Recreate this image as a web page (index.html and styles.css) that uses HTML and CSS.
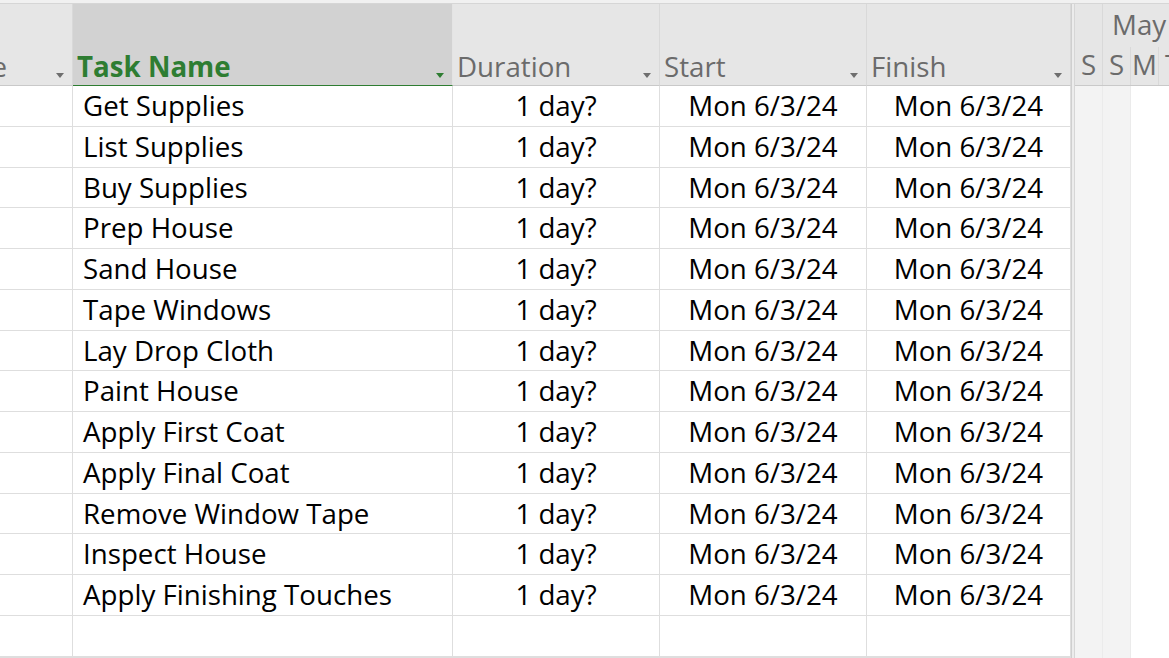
FILE: index.html
```html
<!DOCTYPE html>
<html>
<head>
<meta charset="utf-8">
<link rel="stylesheet" href="styles.css">
</head>
<body>
<div class="app">
  <div class="topbar"></div>
  <div class="main">
    <div class="sheet">
      <div class="hcell hcell-first"><span class="hlabel">Task Mode</span><span class="arrow"></span></div>
      <div class="hcell hcell-sel"><span class="hlabel">Task Name</span><span class="arrow arrow-green"></span></div>
      <div class="hcell"><span class="hlabel">Duration</span><span class="arrow"></span></div>
      <div class="hcell"><span class="hlabel">Start</span><span class="arrow"></span></div>
      <div class="hcell"><span class="hlabel">Finish</span><span class="arrow"></span></div>

      <div class="cell"></div><div class="cell name">Get Supplies</div><div class="cell center">1 day?</div><div class="cell center">Mon 6/3/24</div><div class="cell center">Mon 6/3/24</div>
      <div class="cell"></div><div class="cell name">List Supplies</div><div class="cell center">1 day?</div><div class="cell center">Mon 6/3/24</div><div class="cell center">Mon 6/3/24</div>
      <div class="cell"></div><div class="cell name">Buy Supplies</div><div class="cell center">1 day?</div><div class="cell center">Mon 6/3/24</div><div class="cell center">Mon 6/3/24</div>
      <div class="cell"></div><div class="cell name">Prep House</div><div class="cell center">1 day?</div><div class="cell center">Mon 6/3/24</div><div class="cell center">Mon 6/3/24</div>
      <div class="cell"></div><div class="cell name">Sand House</div><div class="cell center">1 day?</div><div class="cell center">Mon 6/3/24</div><div class="cell center">Mon 6/3/24</div>
      <div class="cell"></div><div class="cell name">Tape Windows</div><div class="cell center">1 day?</div><div class="cell center">Mon 6/3/24</div><div class="cell center">Mon 6/3/24</div>
      <div class="cell"></div><div class="cell name">Lay Drop Cloth</div><div class="cell center">1 day?</div><div class="cell center">Mon 6/3/24</div><div class="cell center">Mon 6/3/24</div>
      <div class="cell"></div><div class="cell name">Paint House</div><div class="cell center">1 day?</div><div class="cell center">Mon 6/3/24</div><div class="cell center">Mon 6/3/24</div>
      <div class="cell"></div><div class="cell name">Apply First Coat</div><div class="cell center">1 day?</div><div class="cell center">Mon 6/3/24</div><div class="cell center">Mon 6/3/24</div>
      <div class="cell"></div><div class="cell name">Apply Final Coat</div><div class="cell center">1 day?</div><div class="cell center">Mon 6/3/24</div><div class="cell center">Mon 6/3/24</div>
      <div class="cell"></div><div class="cell name">Remove Window Tape</div><div class="cell center">1 day?</div><div class="cell center">Mon 6/3/24</div><div class="cell center">Mon 6/3/24</div>
      <div class="cell"></div><div class="cell name">Inspect House</div><div class="cell center">1 day?</div><div class="cell center">Mon 6/3/24</div><div class="cell center">Mon 6/3/24</div>
      <div class="cell"></div><div class="cell name">Apply Finishing Touches</div><div class="cell center">1 day?</div><div class="cell center">Mon 6/3/24</div><div class="cell center">Mon 6/3/24</div>
      <div class="cell"></div><div class="cell name"></div><div class="cell center"></div><div class="cell center"></div><div class="cell center"></div>
      <div class="cell"></div><div class="cell name"></div><div class="cell center"></div><div class="cell center"></div><div class="cell center"></div>
    </div>
    <div class="splitter"></div>
    <div class="gantt">
      <div class="ghead">
        <div class="tier-top">
          <div class="week-prev"></div>
          <div class="week">May</div>
        </div>
        <div class="tier-days">
          <div class="day">S</div>
          <div class="day">S</div>
          <div class="day">M</div>
          <div class="day">T</div>
        </div>
      </div>
      <div class="gbody">
        <div class="gcol gcol-off"></div>
        <div class="gcol gcol-off"></div>
        <div class="gcol"></div>
        <div class="gcol"></div>
      </div>
    </div>
  </div>
</div>
</body>
</html>
```
FILE: styles.css
```css
* { box-sizing: border-box; }
html, body {
  margin: 0;
  padding: 0;
  width: 1169px;
  height: 658px;
  overflow: hidden;
  background: #ffffff;
  font-family: "Open Sans", "Noto Sans", sans-serif;
}
.app {
  display: flex;
  flex-direction: column;
  height: 658px;
}
.topbar {
  height: 4px;
  background: #f1f1f1;
  border-bottom: 1px solid #d6d6d6;
  flex: none;
}
.main {
  display: flex;
  flex: 1;
  min-height: 0;
}
.sheet {
  display: grid;
  grid-template-columns: 73px 380px 207px 207px 204px;
  grid-template-rows: 82px repeat(14, 40.75px);
  flex: none;
  overflow: hidden;
}
.hcell {
  background: #e6e6e6;
  border-right: 1px solid #d9d9d9;
  border-bottom: 1px solid #c9c9c9;
  display: flex;
  align-items: flex-end;
  justify-content: space-between;
  padding: 0 8px 6px 4px;
  overflow: hidden;
  white-space: nowrap;
}
.hcell-first {
  justify-content: flex-end;
  gap: 49px;
}
.hcell-sel {
  background: #d2d2d2;
  border-right-color: #e4e4e4;
  border-bottom: 1px solid #2e7d32;
}
.hlabel {
  font-size: 27.7px;
  line-height: 34px;
  color: #6b6b6b;
  margin-bottom: -4px;
}
.hcell-sel .hlabel {
  color: #2e7d32;
  font-weight: 700;
}
.arrow {
  width: 0;
  height: 0;
  border-left: 4.5px solid transparent;
  border-right: 4.5px solid transparent;
  border-top: 5px solid #6e6e6e;
  margin-bottom: 1px;
  flex: none;
}
.arrow-green { border-top-color: #2e7d32; }
.cell {
  border-right: 1px solid #dedede;
  border-bottom: 1px solid #dedede;
  font-size: 27.7px;
  line-height: 38px;
  color: #000;
  white-space: nowrap;
  overflow: hidden;
}
.name { padding-left: 10px; }
.center { text-align: center; }
.splitter {
  width: 4px;
  flex: none;
  background: #ececec;
  border-left: 1px solid #cfcfcf;
  border-right: 1px solid #d6d6d6;
}
.gantt {
  flex: 1;
  display: flex;
  flex-direction: column;
  overflow: hidden;
}
.ghead {
  height: 82px;
  flex: none;
  background: #e6e6e6;
  border-bottom: 1px solid #c9c9c9;
  display: flex;
  flex-direction: column;
}
.tier-top {
  height: 43px;
  display: flex;
}
.week-prev {
  width: 28px;
  flex: none;
  border-right: 1px solid #d9d9d9;
}
.week {
  padding-left: 9px;
  font-size: 27.7px;
  line-height: 40px;
  color: #6b6b6b;
  white-space: nowrap;
}
.tier-days {
  flex: 1;
  display: flex;
}
.day {
  width: 28px;
  flex: none;
  border-right: 1px solid #d9d9d9;
  text-align: center;
  font-size: 27.7px;
  line-height: 34px;
  color: #6b6b6b;
}
.gbody {
  flex: 1;
  display: flex;
}
.gcol {
  width: 28px;
  flex: none;
}
.gcol-off {
  background: #f3f3f3;
  border-right: 1px solid #ebebeb;
}
```
